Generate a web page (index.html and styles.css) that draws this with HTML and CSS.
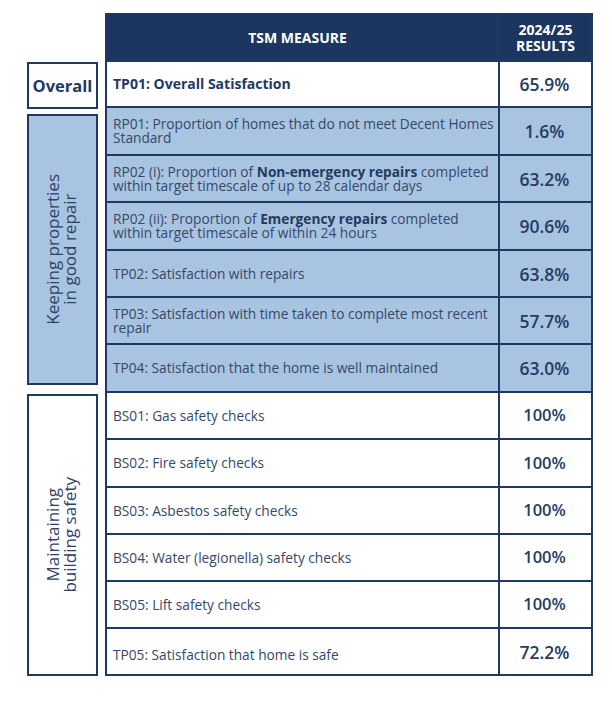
FILE: index.html
```html
<!DOCTYPE html>
<html lang="en">
<head>
<meta charset="utf-8">
<title>TSM Results 2024/25</title>
<link rel="stylesheet" href="styles.css">
</head>
<body>
<div class="page">
  <div class="labels">
    <div class="label label-overall">Overall</div>
    <div class="label label-repair"><span class="vtext">Keeping properties<br>in good repair</span></div>
    <div class="label label-safety"><span class="vtext">Maintaining<br>building safety</span></div>
  </div>
  <div class="table">
    <div class="th th-measure">TSM MEASURE</div>
    <div class="th th-result">2024/25<br>RESULTS</div>

    <div class="td desc strong"><span>TP01: Overall Satisfaction</span></div>
    <div class="td val">65.9%</div>

    <div class="td desc blue"><span>RP01: Proportion of homes that do not meet Decent Homes Standard</span></div>
    <div class="td val blue">1.6%</div>

    <div class="td desc blue"><span>RP02 (i): Proportion of <b>Non-emergency repairs</b> completed within target timescale of up to 28 calendar days</span></div>
    <div class="td val blue">63.2%</div>

    <div class="td desc blue"><span>RP02 (ii): Proportion of <b>Emergency repairs</b> completed within target timescale of within 24 hours</span></div>
    <div class="td val blue">90.6%</div>

    <div class="td desc blue"><span>TP02: Satisfaction with repairs</span></div>
    <div class="td val blue">63.8%</div>

    <div class="td desc blue"><span>TP03: Satisfaction with time taken to complete most recent repair</span></div>
    <div class="td val blue">57.7%</div>

    <div class="td desc blue"><span>TP04: Satisfaction that the home is well maintained</span></div>
    <div class="td val blue">63.0%</div>

    <div class="td desc"><span>BS01: Gas safety checks</span></div>
    <div class="td val plain">100%</div>

    <div class="td desc"><span>BS02: Fire safety checks</span></div>
    <div class="td val plain">100%</div>

    <div class="td desc"><span>BS03: Asbestos safety checks</span></div>
    <div class="td val plain">100%</div>

    <div class="td desc"><span>BS04: Water (legionella) safety checks</span></div>
    <div class="td val plain">100%</div>

    <div class="td desc"><span>BS05: Lift safety checks</span></div>
    <div class="td val plain">100%</div>

    <div class="td desc low"><span>TP05: Satisfaction that home is safe</span></div>
    <div class="td val">72.2%</div>
  </div>
</div>
</body>
</html>
```

FILE: styles.css
```css
* { box-sizing: border-box; }

html, body {
  margin: 0;
  padding: 0;
  background: #ffffff;
}

body {
  font-family: "Open Sans", "DejaVu Sans", sans-serif;
  color: #2b3f63;
}

.page {
  display: flex;
  align-items: flex-start;
  padding: 13px 0 0 27px;
}

.labels {
  width: 71px;
  margin-right: 7px;
  margin-top: 49px;
  display: flex;
  flex-direction: column;
}

.label {
  border: 2px solid #1f3864;
  display: flex;
  align-items: center;
  justify-content: center;
  color: #1f3864;
}

.label-overall {
  height: 47px;
  font-weight: 700;
  font-size: 16.5px;
}

.label-repair {
  height: 271px;
  margin-top: 5px;
  background: #a9c4e0;
  padding-right: 3px;
}

.label-safety {
  height: 282px;
  margin-top: 9px;
  padding-right: 3px;
}

.vtext {
  writing-mode: vertical-rl;
  transform: rotate(180deg);
  text-align: center;
  font-size: 17px;
  line-height: 17px;
  color: #2d4268;
}

.table {
  width: 488px;
  display: grid;
  grid-template-columns: 391px 91px;
  grid-template-rows: 47px 44px 46px 45px 46px 45px 45px 46px 45px 46px 45px 45px 45px 45px;
  gap: 2px;
  padding: 0 2px 2px 2px;
  background: #1f3864;
}

.th {
  background: #1b365f;
  color: #ffffff;
  font-weight: 700;
  font-size: 14px;
  line-height: 16px;
  display: flex;
  align-items: center;
  justify-content: center;
  text-align: center;
}

.th-measure {
  padding-right: 10px;
  padding-top: 2px;
}

.th-result {
  padding-top: 2px;
}

.td {
  background: #ffffff;
  display: flex;
  align-items: center;
}

.td.blue {
  background: #a9c4e0;
}

.desc {
  padding: 0 2px 0 6px;
  font-size: 13.7px;
  line-height: 14px;
  color: #34486b;
}

.desc b {
  font-weight: 700;
  color: #243a61;
}

.desc.strong {
  font-weight: 700;
  font-size: 14px;
  color: #1f3864;
}

.desc.low {
  padding-top: 6px;
}

.val {
  justify-content: center;
  font-size: 17.5px;
  font-weight: 600;
  color: #263c63;
  padding-right: 2px;
}

.val.plain {
  font-size: 16.5px;
  font-weight: 600;
  padding-bottom: 2px;
}
```
